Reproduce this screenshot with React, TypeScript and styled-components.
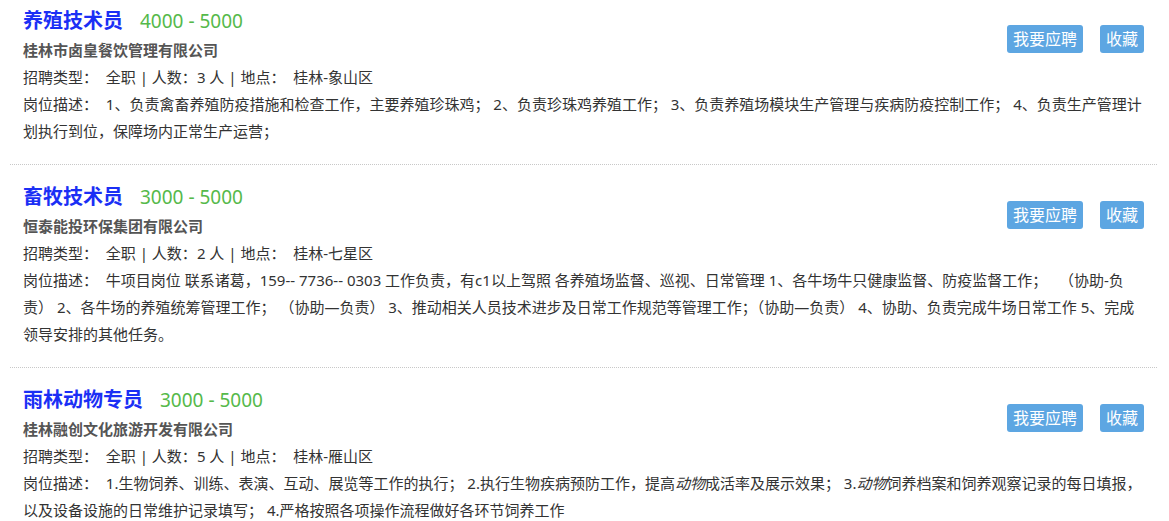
import React from 'react';
import styled, { createGlobalStyle } from 'styled-components';

interface Job {
  id: number;
  title: string;
  salary: string;
  company: string;
  count: number;
  place: string;
  desc: React.ReactNode;
}

const GlobalStyle = createGlobalStyle`
  body {
    margin: 0;
    background: #fff;
    font-family: "Noto Sans", "Noto Sans CJK SC", sans-serif;
    color: #333;
  }
`;

const List = styled.div`
  margin-top: -11px;
`;

const Item = styled.div`
  margin: 0 12px 0 10px;
  padding: 17px 13px 19px;
  border-bottom: 1px dotted #c8c8c8;
`;

const Head = styled.div`
  display: flex;
  justify-content: space-between;
  align-items: flex-start;
`;

const Info = styled.div`
  display: flex;
  flex-direction: column;
`;

const TitleRow = styled.div`
  display: flex;
  align-items: baseline;
  height: 30px;
  line-height: 30px;
`;

const Title = styled.span`
  font-size: 20px;
  font-weight: bold;
  color: #1b2ff5;
`;

const Salary = styled.span`
  margin-left: 17px;
  font-size: 19px;
  color: #55b94a;
`;

const Company = styled.div`
  font-size: 15px;
  font-weight: bold;
  color: #555;
  line-height: 27px;
  margin-top: 1px;
`;

const Line = styled.div`
  font-size: 15px;
  line-height: 27px;
  color: #333;
`;

const Actions = styled.div`
  display: flex;
  gap: 17px;
  margin-top: 19px;
`;

const Button = styled.button`
  height: 28px;
  padding: 0 6px;
  border: none;
  border-radius: 3px;
  background: #5da6e2;
  color: #fff;
  font-family: inherit;
  font-size: 16px;
  line-height: 28px;
  cursor: pointer;
`;

const jobs: Job[] = [
  {
    id: 1,
    title: '养殖技术员',
    salary: '4000 - 5000',
    company: '桂林市卤皇餐饮管理有限公司',
    count: 3,
    place: '桂林-象山区',
    desc: '1、负责禽畜养殖防疫措施和检查工作，主要养殖珍珠鸡； 2、负责珍珠鸡养殖工作； 3、负责养殖场模块生产管理与疾病防疫控制工作； 4、负责生产管理计划执行到位，保障场内正常生产运营；',
  },
  {
    id: 2,
    title: '畜牧技术员',
    salary: '3000 - 5000',
    company: '恒泰能投环保集团有限公司',
    count: 2,
    place: '桂林-七星区',
    desc: '牛项目岗位 联系诸葛，159-- 7736-- 0303 工作负责，有c1以上驾照 各养殖场监督、巡视、日常管理 1、各牛场牛只健康监督、防疫监督工作；\u00a0\u00a0 （协助-负责） 2、各牛场的养殖统筹管理工作； （协助—负责） 3、推动相关人员技术进步及日常工作规范等管理工作；（协助—负责） 4、协助、负责完成牛场日常工作 5、完成领导安排的其他任务。',
  },
  {
    id: 3,
    title: '雨林动物专员',
    salary: '3000 - 5000',
    company: '桂林融创文化旅游开发有限公司',
    count: 5,
    place: '桂林-雁山区',
    desc: (
      <>
        1.生物饲养、训练、表演、互动、展览等工作的执行； 2.执行生物疾病预防工作，提高<i>动物</i>成活率及展示效果； 3.<i>动物</i>饲养档案和饲养观察记录的每日填报，以及设备设施的日常维护记录填写； 4.严格按照各项操作流程做好各环节饲养工作
      </>
    ),
  },
];

const App: React.FC = () => (
  <>
    <GlobalStyle />
    <List>
      {jobs.map(job => (
        <Item key={job.id}>
          <Head>
            <Info>
              <TitleRow>
                <Title>{job.title}</Title>
                <Salary>{job.salary}</Salary>
              </TitleRow>
              <Company>{job.company}</Company>
              <Line>
                招聘类型：&nbsp; 全职 | 人数：{job.count} 人 | 地点：&nbsp; {job.place}
              </Line>
            </Info>
            <Actions>
              <Button>我要应聘</Button>
              <Button>收藏</Button>
            </Actions>
          </Head>
          <Line>岗位描述：&nbsp; {job.desc}</Line>
        </Item>
      ))}
    </List>
  </>
);

export default App;
